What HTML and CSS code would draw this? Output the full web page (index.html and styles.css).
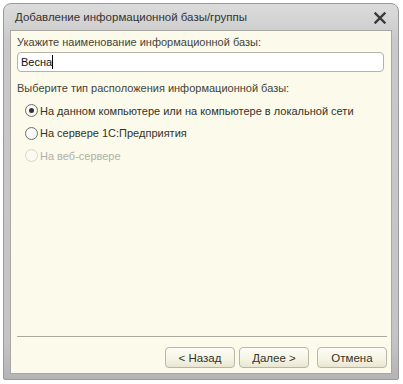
FILE: index.html
```html
<!DOCTYPE html>
<html lang="ru">
<head>
<meta charset="utf-8">
<link rel="stylesheet" href="styles.css">
</head>
<body>
<div class="window">
  <div class="titlebar">
    <span class="title">Добавление информационной базы/группы</span>
    <svg class="close" width="12" height="12" viewBox="0 0 12 12"><path d="M1.5 1.5 L10.5 10.5 M10.5 1.5 L1.5 10.5" stroke="#3a3a3a" stroke-width="2.4" stroke-linecap="square"/></svg>
  </div>
  <div class="client">
    <div class="label">Укажите наименование информационной базы:</div>
    <div class="input"><span>Весна</span><span class="caret"></span></div>
    <div class="label label2">Выберите тип расположения информационной базы:</div>
    <div class="radios">
      <div class="radio"><span class="dot checked"></span><span>На данном компьютере или на компьютере в локальной сети</span></div>
      <div class="radio"><span class="dot"></span><span>На сервере 1С:Предприятия</span></div>
      <div class="radio disabled"><span class="dot"></span><span>На веб-сервере</span></div>
    </div>
    <div class="spacer"></div>
    <div class="sep"></div>
    <div class="buttons">
      <div class="btn">&lt; Назад</div>
      <div class="btn">Далее &gt;</div>
      <div class="btn cancel">Отмена</div>
    </div>
  </div>
</div>
</body>
</html>
```
FILE: styles.css
```css
html, body { margin: 0; padding: 0; background: #ffffff; }
body { font-family: "Liberation Sans", Arial, sans-serif; font-size: 11px; color: #3d3d33; }
.window {
  margin: 3px 0 0 3px;
  width: 396px;
  height: 377px;
  box-sizing: border-box;
  border: 1px solid #9a9a9a;
  border-radius: 8px 8px 2px 2px;
  background: linear-gradient(#dcdcdc, #c9c9c9 10%, #c4c4c4 90%, #b4b4b4);
  display: flex;
  flex-direction: column;
  padding: 0 6px 5px 6px;
}
.titlebar {
  height: 26px;
  display: flex;
  align-items: center;
  justify-content: space-between;
  padding: 0 6px 0 5px;
  flex: none;
}
.title { color: #333; font-size: 11.5px; }
.close { margin-top: 1px; }
.client {
  flex: 1;
  background: #fbfaeb;
  border: 1px solid #a8a8a0;
  display: flex;
  flex-direction: column;
  padding: 5px 4px 4px 6px;
}
.label { line-height: 13px; color: #444438; }
.input {
  margin-top: 3px;
  height: 20px;
  box-sizing: border-box;
  border: 1px solid #b5b3a6;
  border-radius: 4px;
  background: #ffffff;
  display: flex;
  align-items: center;
  padding-left: 3px;
  color: #111;
  margin-right: 3px;
}
.caret { display: inline-block; width: 1px; height: 14px; background: #000; }
.label2 { margin-top: 10px; }
.radios { margin-top: 8px; padding-left: 8px; display: flex; flex-direction: column; gap: 7.5px; }
.radio { display: flex; align-items: center; height: 15px; color: #333328; }
.dot {
  width: 13px; height: 13px; box-sizing: border-box;
  border: 1px solid #6f6f6a; border-radius: 50%;
  background: radial-gradient(circle at 40% 40%, #ffffff, #eeeeea);
  margin-right: 2px;
  position: relative;
}
.dot.checked::after {
  content: ""; position: absolute; left: 3px; top: 3px; width: 5px; height: 5px;
  border-radius: 50%; background: #333;
}
.radio.disabled { color: #b0b0a6; }
.radio.disabled .dot { border-color: #d6d6ce; background: #fbfaf0; }
.spacer { flex: 1; }
.sep { height: 1px; background: #aaa99a; border-bottom: 1px solid #ffffff; margin-bottom: 9px; }
.buttons { display: flex; justify-content: flex-end; gap: 4px; margin-bottom: 1px; }
.btn {
  width: 70px; height: 21px; box-sizing: border-box;
  border: 1px solid #b8b6a6; border-radius: 4px;
  background: linear-gradient(#fdfdf6, #f4f3e4 60%, #e9e7d2);
  display: flex; align-items: center; justify-content: center;
  color: #333328;
  font-size: 11.5px;
}
.btn.cancel { margin-left: 4px; }
```
